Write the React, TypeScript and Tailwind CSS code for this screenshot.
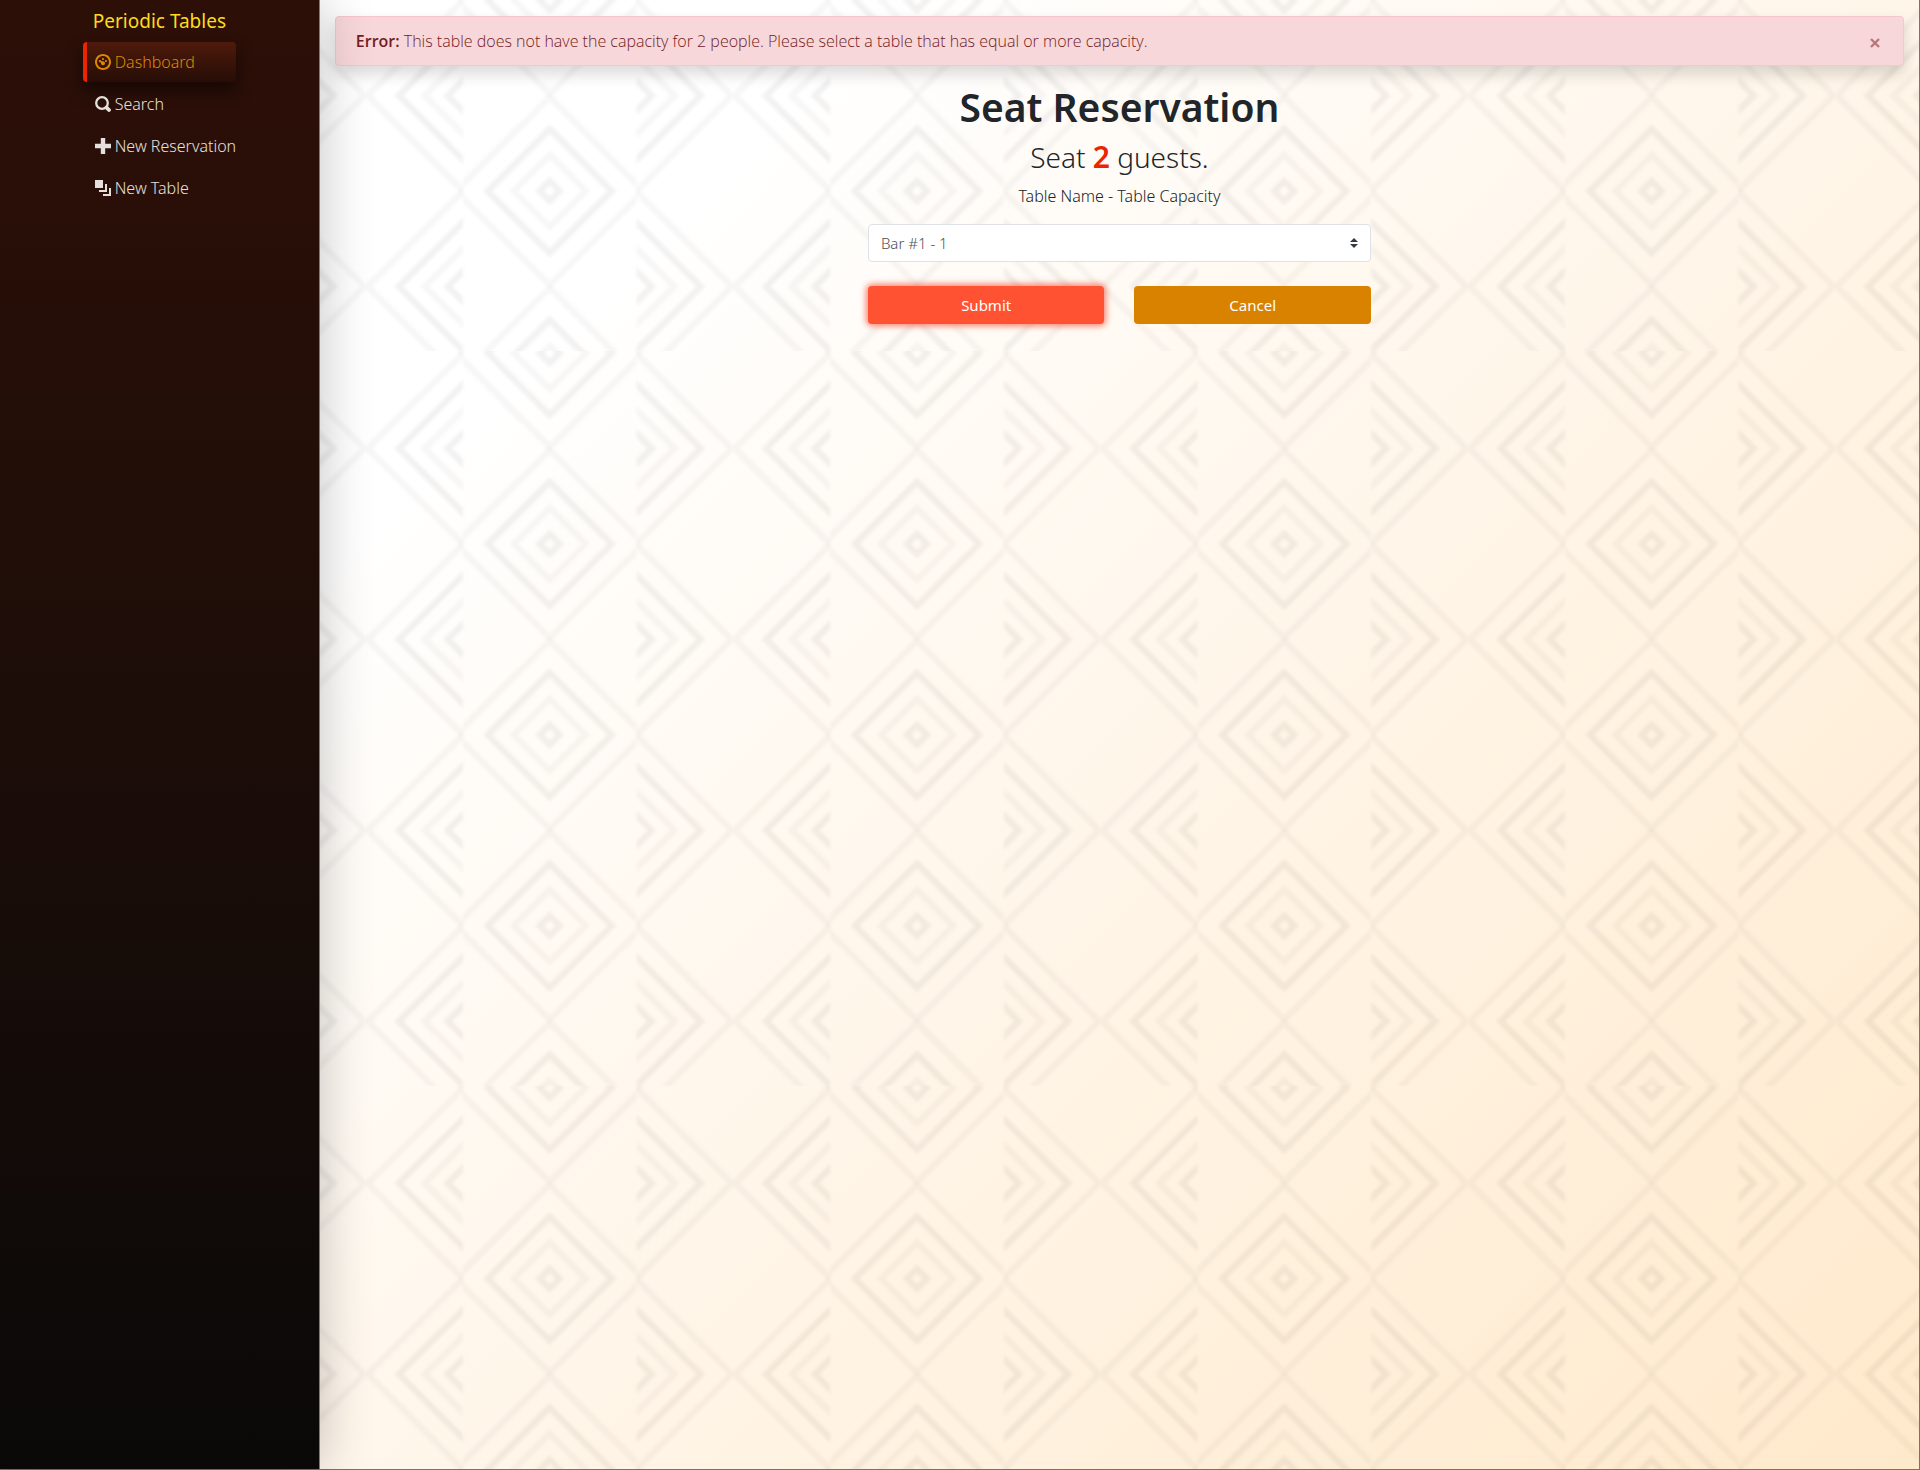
import type { ReactNode } from "react";

const MIDDLE_RINGS = [
  { size: 94, tone: 0.03 },
  { size: 62, tone: 0.052 },
  { size: 36, tone: 0.03 },
  { size: 10, tone: 0.052 },
];

const SIDE_RINGS = [
  { size: 95, tone: 0.03 },
  { size: 64, tone: 0.052 },
  { size: 38, tone: 0.03 },
  { size: 15, tone: 0.052 },
];

const diamond = (cx: number, cy: number, r: number) =>
  `M${cx} ${cy - r}L${cx + r} ${cy}L${cx} ${cy + r}L${cx - r} ${cy}Z`;

function Rings({ cx, cy, rings }: { cx: number; cy: number; rings: { size: number; tone: number }[] }) {
  return (
    <>
      {rings.map(({ size, tone }) => (
        <path key={size} d={diamond(cx, cy, size)} strokeOpacity={tone} />
      ))}
    </>
  );
}

function PatternBackdrop() {
  const centres = [2, 192.9, 383.8, 574.7, 765.6];
  const sides = [-93, 97.5, 288.4, 479.3, 670.2];
  return (
    <svg className="absolute inset-0 h-full w-full" aria-hidden="true">
      <defs>
        <filter id="soften" x="-5%" y="-5%" width="110%" height="110%">
          <feGaussianBlur stdDeviation="1.6" />
        </filter>
        <clipPath id="middle">
          <rect x="96.7" y="-200" width="174" height="1200" />
        </clipPath>
        <clipPath id="outside">
          <rect x="-10" y="-200" width="107" height="1200" />
          <rect x="270.7" y="-200" width="107" height="1200" />
        </clipPath>
        <pattern id="diamonds" patternUnits="userSpaceOnUse" x="46" y="351" width="367.3" height="734.7">
          <g fill="none" stroke="#1a0a00" strokeWidth="6.5" filter="url(#soften)">
            <g clipPath="url(#middle)">
              {centres.map((y) => (
                <Rings key={y} cx={183.7} cy={y} rings={MIDDLE_RINGS} />
              ))}
            </g>
            <g clipPath="url(#outside)">
              {sides.map((y) => (
                <g key={y}>
                  <Rings cx={96.7} cy={y} rings={SIDE_RINGS} />
                  <Rings cx={270.7} cy={y} rings={SIDE_RINGS} />
                </g>
              ))}
            </g>
          </g>
        </pattern>
      </defs>
      <rect width="100%" height="100%" fill="url(#diamonds)" />
    </svg>
  );
}

function Glyph({ children }: { children: ReactNode }) {
  return (
    <svg viewBox="0 0 8 8" className="size-4 shrink-0 fill-current" aria-hidden="true">
      {children}
    </svg>
  );
}

const LINKS = [
  {
    label: "Dashboard",
    icon: (
      <path d="M4 0C1.8 0 0 1.8 0 4s1.8 4 4 4 4-1.8 4-4-1.8-4-4-4zm0 1c1.66 0 3 1.34 3 3S5.66 7 4 7 1 5.66 1 4s1.34-3 3-3zm0 1c-.28 0-.5.22-.5.5s.22.5.5.5.5-.22.5-.5S4.28 2 4 2zm-1.66 1a.5.5 0 0 0-.19.94l.9.46c-.02.06-.05.12-.05.19 0 .55.45 1 1 1s1-.45 1-1-.45-1-1-1c-.16 0-.3.05-.44.12l-.9-.65A.5.5 0 0 0 2.34 3zM5.5 3c-.28 0-.5.22-.5.5s.22.5.5.5.5-.22.5-.5-.22-.5-.5-.5z" />
    ),
  },
  {
    label: "Search",
    icon: (
      <>
        <circle cx="3.5" cy="3.5" r="2.9" fill="none" stroke="currentColor" strokeWidth="1.15" />
        <path d="M5.8 5.8l1.2 1.2" fill="none" stroke="currentColor" strokeWidth="1.9" strokeLinecap="round" />
      </>
    ),
  },
  { label: "New Reservation", icon: <path d="M2.9 0v2.9H0v2.2h2.9V8h2.2V5.1H8V2.9H5.1V0H2.9z" /> },
  {
    label: "New Table",
    icon: <path d="M0 0v4h4V0H0zm5 2v3H2v1h4V2H5zm2 2v3H4v1h4V4H7z" />,
  },
];

function Sidebar() {
  return (
    <aside className="relative z-10 flex w-1/6 shrink-0 flex-col items-center border-r border-[#7d7a77] bg-linear-to-b from-[#2d0f07] via-[#1c0d08] via-50% to-[#0a0908] shadow-[0_0_50px_rgba(0,0,0,0.24)]">
      <h2 className="flex h-[42px] items-center text-[19px] text-[#ffd91f]">Periodic Tables</h2>
      <nav>
        <ul className="flex flex-col gap-[2px]">
          {LINKS.map(({ label, icon }, i) => (
            <li key={label}>
              <a
                href={`#${label}`}
                className={
                  i === 0
                    ? "flex h-10 items-center gap-1 rounded-[4px] border-l-4 border-[#ea2500] bg-linear-to-b from-[#4f1a0c] to-[#260d06] pl-2 text-base font-light text-[#dd8800] shadow-[0_8px_16px_rgba(0,0,0,0.5)]"
                    : "flex h-10 items-center gap-1 border-l-4 border-transparent pl-2 text-base font-light text-[#e6e0dd]"
                }
              >
                <Glyph>{icon}</Glyph>
                {label}
              </a>
            </li>
          ))}
        </ul>
      </nav>
    </aside>
  );
}

export default function App() {
  return (
    <div className="flex min-h-screen border-r border-b border-[#77736f] font-['Noto_Sans',sans-serif] text-[15px] text-[#212529]">
      <Sidebar />
      <main className="relative min-w-0 flex-1 overflow-hidden bg-linear-135 from-white from-18% to-[#ffe9cb] px-[15px] pt-4">
        <PatternBackdrop />
        <div className="relative">
          <div
            role="alert"
            className="flex h-[50px] items-center justify-between rounded-[4px] border border-[#f5c6cb] bg-[#f8d7da] px-5 text-[#721c24] shadow-[0_8px_16px_rgba(0,0,0,0.15)]"
          >
            <p className="font-['Open_Sans',sans-serif] text-base font-light">
              <strong className="font-semibold">Error:</strong> This table does not have the capacity for 2 people. Please select a
              table that has equal or more capacity.
            </p>
            <button type="button" aria-label="Close" className="flex size-4 items-center justify-center text-[#b9757c]">
              <svg viewBox="0 0 10 10" className="mt-1 size-[10px]" aria-hidden="true">
                <path d="M1 1l8 8M9 1l-8 8" stroke="currentColor" strokeWidth="2.4" />
              </svg>
            </button>
          </div>

          <form className="mx-auto w-1/3 px-[10px] text-center" onSubmit={(e) => e.preventDefault()}>
            <h1 className="mt-4 text-[39px] leading-[50px] font-semibold">Seat Reservation</h1>
            <p className="mt-1 text-[28px] leading-[42px] font-light">
              Seat <strong className="text-[30px] font-semibold text-[#ea2500]">2</strong> guests.
            </p>
            <label htmlFor="table" className="mt-[2px] block text-base leading-8 font-light">
              Table Name - Table Capacity
            </label>
            <div className="relative mt-3">
              <select
                id="table"
                defaultValue="bar1"
                className="h-[38px] w-full appearance-none rounded-[4px] border border-[#dee2e6] bg-white px-3 text-[15px] font-light text-[#495057]"
              >
                <option value="bar1">Bar #1 - 1</option>
              </select>
              <svg viewBox="0 0 8 10" className="pointer-events-none absolute top-[14px] right-[13px] h-[10px] w-2 fill-[#343a40]" aria-hidden="true">
                <path d="M4 0L0 4h8zM4 10L0 6h8z" />
              </svg>
            </div>
            <div className="mt-6 grid grid-cols-2 gap-[30px] text-white">
              <button type="submit" className="h-[38px] rounded-[4px] bg-[#ff5233] shadow-[0_0_6px_2px_rgba(240,50,20,0.6)]">
                Submit
              </button>
              <button type="button" className="h-[38px] rounded-[4px] bg-[#d98200]">
                Cancel
              </button>
            </div>
          </form>
        </div>
      </main>
    </div>
  );
}
